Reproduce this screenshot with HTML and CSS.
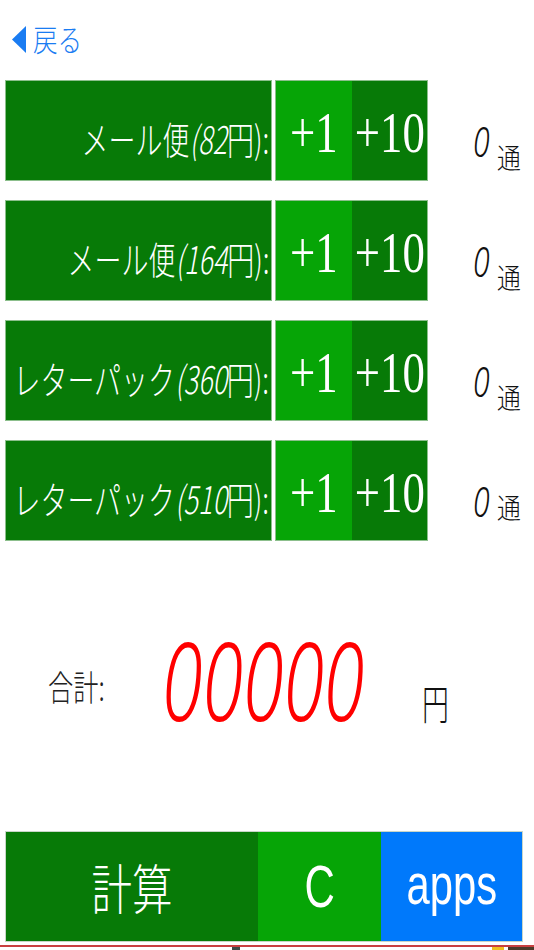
FILE: index.html
```html
<!DOCTYPE html>
<html lang="ja">
<head>
<meta charset="utf-8">
<title>郵便料金計算</title>
<link rel="stylesheet" href="styles.css">
</head>
<body>
<div class="page">
  <header class="nav">
    <a class="back" href="#">
      <svg class="back-arrow" width="15" height="27" viewBox="0 0 15 27"><polygon points="14,0 14,27 0,13.5" fill="#1a7cf2"/></svg>
      <span class="back-text">戻る</span>
    </a>
  </header>

  <section class="rows">
    <div class="row">
      <div class="label"><span class="label-text">メール便<i>(82</i>円):</span></div>
      <div class="btn btn-1"><span class="btn-text">+1</span></div>
      <div class="btn btn-10"><span class="btn-text">+10</span></div>
      <div class="count"><span class="count-num">0</span><span class="count-unit">通</span></div>
    </div>
    <div class="row">
      <div class="label"><span class="label-text">メール便<i>(164</i>円):</span></div>
      <div class="btn btn-1"><span class="btn-text">+1</span></div>
      <div class="btn btn-10"><span class="btn-text">+10</span></div>
      <div class="count"><span class="count-num">0</span><span class="count-unit">通</span></div>
    </div>
    <div class="row">
      <div class="label"><span class="label-text">レターパック<i>(360</i>円):</span></div>
      <div class="btn btn-1"><span class="btn-text">+1</span></div>
      <div class="btn btn-10"><span class="btn-text">+10</span></div>
      <div class="count"><span class="count-num">0</span><span class="count-unit">通</span></div>
    </div>
    <div class="row">
      <div class="label"><span class="label-text">レターパック<i>(510</i>円):</span></div>
      <div class="btn btn-1"><span class="btn-text">+1</span></div>
      <div class="btn btn-10"><span class="btn-text">+10</span></div>
      <div class="count count-last"><span class="count-num">0</span><span class="count-unit">通</span></div>
    </div>
  </section>

  <section class="total">
    <div class="total-label"><span class="total-label-text">合計:</span></div>
    <div class="total-value"><span class="total-value-text">00000</span></div>
    <div class="total-unit"><span class="total-unit-text">円</span></div>
  </section>

  <section class="actions">
    <div class="act act-calc"><span class="act-calc-text">計算</span></div>
    <div class="act act-clear"><span class="act-clear-text">C</span></div>
    <div class="act act-apps"><span class="act-apps-text">apps</span></div>
  </section>

  <div class="ad">
    <div class="ad-inner">
      <span class="ad-a"></span><span class="ad-b"></span><span class="ad-c"></span>
    </div>
  </div>
</div>
</body>
</html>
```

FILE: styles.css
```css
* { box-sizing: border-box; }
html, body { margin: 0; padding: 0; background: #fff; }
body {
  width: 534px;
  height: 950px;
  overflow: hidden;
  font-family: "Noto Sans CJK JP", "Noto Sans", sans-serif;
  font-weight: 300;
}
.page { width: 534px; }

/* nav */
.nav { height: 80px; padding: 22px 0 0 12px; }
.back {
  display: flex;
  align-items: center;
  text-decoration: none;
  color: #1a7cf2;
  height: 32px;
}
.back-arrow { display: block; margin-top: 2px; }
.back-text {
  display: inline-block;
  font-size: 30px;
  line-height: 32px;
  margin-left: 6px;
  transform: scaleX(0.82);
  transform-origin: left center;
}

/* rows */
.rows {
  display: flex;
  flex-direction: column;
  gap: 19px;
  padding-left: 5px;
}
.row {
  display: flex;
  height: 101px;
}
.label {
  width: 267px;
  margin-right: 3px;
  background: #077a07;
  border: 1px solid #8cbf8c;
  display: flex;
  justify-content: flex-end;
  align-items: center;
  padding: 14px 2px 0 0;
  color: #fff;
}
.label-text {
  display: inline-block;
  white-space: nowrap;
  font-size: 38px;
  line-height: 40px;
  transform: scaleX(0.71);
  transform-origin: right center;
}
.label-text i { font-style: italic; }

.btn {
  display: flex;
  justify-content: center;
  align-items: center;
  color: #fff;
  border-top: 1px solid #8cbf8c;
  border-bottom: 1px solid #8cbf8c;
  padding-top: 4px;
}
.btn-1 { width: 77px; background: #06a506; border-left: 1px solid #8cbf8c; }
.btn-10 { width: 76px; background: #077a07; border-right: 1px solid #8cbf8c; }
.btn-text {
  display: inline-block;
  white-space: nowrap;
  font-family: "Liberation Serif", "DejaVu Serif", serif;
  font-weight: 400;
  font-size: 56px;
  line-height: 56px;
  transform: scaleX(0.8);
}

.count {
  flex: 1;
  display: flex;
  align-items: flex-start;
  padding: 40px 0 0 45px;
  color: #111;
}
.count-num {
  display: inline-block;
  font-family: "Noto Sans", "Liberation Sans", sans-serif;
  font-style: italic;
  font-weight: 300;
  font-size: 42px;
  line-height: 42px;
  width: 24px;
  transform: scaleX(0.72);
  transform-origin: left center;
}
.count-unit {
  display: inline-block;
  font-size: 28px;
  line-height: 30px;
  margin-top: 22px;
  transform: scaleX(0.85);
  transform-origin: left center;
}
.count-last .count-unit { margin-top: 12px; }

/* total */
.total {
  height: 290px;
  display: flex;
  align-items: flex-start;
  padding-left: 48px;
}
.total-label { width: 114px; padding-top: 125px; color: #222; }
.total-label-text {
  display: inline-block;
  font-size: 35px;
  line-height: 40px;
  transform: scaleX(0.72);
  transform-origin: left center;
}
.total-value { width: 260px; padding-top: 84px; color: #ff0000; }
.total-value-text {
  display: inline-block;
  font-family: "Noto Sans", "Liberation Sans", sans-serif;
  font-style: italic;
  font-weight: 300;
  font-size: 108px;
  line-height: 110px;
  transform: scaleX(0.68);
  transform-origin: left center;
}
.total-unit { padding-top: 138px; color: #111; }
.total-unit-text {
  display: inline-block;
  font-size: 42px;
  line-height: 46px;
  transform: scaleX(0.64);
  transform-origin: left center;
}

/* actions */
.actions {
  display: flex;
  margin-left: 5px;
  width: 518px;
  height: 111px;
  border: 1px solid #c8d6c8;
}
.act {
  display: flex;
  justify-content: center;
  align-items: center;
  color: #fff;
}
.act-calc { width: 252px; background: #077a07; }
.act-clear { width: 123px; background: #06a506; }
.act-apps { flex: 1; background: #0079fb; }
.act-calc-text {
  display: inline-block;
  font-size: 54px;
  line-height: 60px;
  transform: scaleX(0.75);
}
.act-clear-text {
  display: inline-block;
  font-family: "Liberation Sans", sans-serif;
  font-weight: 400;
  font-size: 60px;
  line-height: 60px;
  transform: scaleX(0.7);
}
.act-apps-text {
  display: inline-block;
  font-family: "Liberation Sans", sans-serif;
  font-weight: 400;
  font-size: 58px;
  line-height: 60px;
  padding-bottom: 6px;
  transform: scaleX(0.72);
}

/* ad strip */
.ad { margin-top: 3px; border-top: 2px solid #c84040; height: 10px; background: #fff; }
.ad-inner { position: relative; height: 8px; }
.ad-a { position: absolute; left: 232px; top: 0; width: 8px; height: 8px; background: #3c4a48; }
.ad-b { position: absolute; left: 492px; top: 0; width: 12px; height: 8px; background: #f0c020; }
.ad-c { position: absolute; left: 508px; top: 0; width: 26px; height: 8px; background: #4a3a2a; }
```
